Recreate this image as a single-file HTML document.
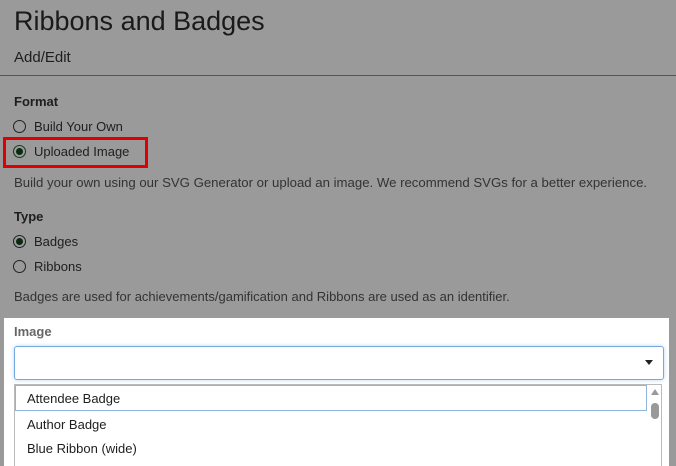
<!DOCTYPE html>
<html><head><style>
html,body{margin:0;width:676px;height:466px;overflow:hidden}
body{background:#9a9a9a;font-family:"Liberation Sans",sans-serif;color:#1e1e1e;position:relative}
.a{position:absolute;white-space:nowrap}
.r{position:absolute;width:13px;height:13px;border:1px solid #222;border-radius:50%;box-sizing:border-box}
.r.on::after{content:"";position:absolute;left:2px;top:2px;width:7px;height:7px;border-radius:50%;background:#0b2b10}
.t{font-size:13px}
</style></head><body>
<div class="a" style="left:14px;top:6px;font-size:27px;color:#1a1a1a">Ribbons and Badges</div>
<div class="a" style="left:14px;top:49px;font-size:15px">Add/Edit</div>
<div class="a" style="left:0;top:75px;width:676px;height:1px;background:#555"></div>
<div class="a t" style="left:14px;top:94px;font-weight:bold">Format</div>
<div class="r" style="left:13px;top:120px"></div><div class="a t" style="left:34px;top:119px">Build Your Own</div>
<div class="a" style="left:3px;top:137px;width:139px;height:25px;border:3px solid #e00000"></div>
<div class="r on" style="left:13px;top:145px;border-color:#1a3a1a"></div><div class="a t" style="left:34px;top:144px">Uploaded Image</div>
<div class="a t" style="left:14px;top:175px;color:#333;font-size:13.2px">Build your own using our SVG Generator or upload an image. We recommend SVGs for a better experience.</div>
<div class="a t" style="left:14px;top:209px;font-weight:bold">Type</div>
<div class="r on" style="left:13px;top:235px"></div><div class="a t" style="left:34px;top:234px">Badges</div>
<div class="r" style="left:13px;top:260px"></div><div class="a t" style="left:34px;top:259px">Ribbons</div>
<div class="a t" style="left:14px;top:289px;color:#333">Badges are used for achievements/gamification and Ribbons are used as an identifier.</div>
<div class="a" style="left:4px;top:318px;width:665px;height:148px;background:#fff"></div>
<div class="a t" style="left:14px;top:324px;color:#666;font-weight:bold">Image</div>
<div class="a" style="left:14px;top:346px;width:648px;height:32px;border:1px solid #74a9e0;border-radius:3px;box-shadow:0 0 4px #bcd6f3"></div>
<div class="a" style="left:645px;top:360px;width:0;height:0;border-left:4px solid transparent;border-right:4px solid transparent;border-top:5px solid #222"></div>
<div class="a" style="left:14px;top:384px;width:648px;height:90px;border:1px solid #bbb;box-sizing:border-box"></div>
<div class="a" style="left:15px;top:385px;width:632px;height:26px;border:1px solid #8fb4de;box-sizing:border-box"></div>
<div class="a t" style="left:27px;top:391px">Attendee Badge</div>
<div class="a t" style="left:27px;top:417px">Author Badge</div>
<div class="a t" style="left:27px;top:441px">Blue Ribbon (wide)</div>
<div class="a" style="left:651px;top:389px;width:0;height:0;border-left:4px solid transparent;border-right:4px solid transparent;border-bottom:6px solid #999"></div>
<div class="a" style="left:651px;top:403px;width:8px;height:16px;border-radius:4px;background:#999"></div>
</body></html>
